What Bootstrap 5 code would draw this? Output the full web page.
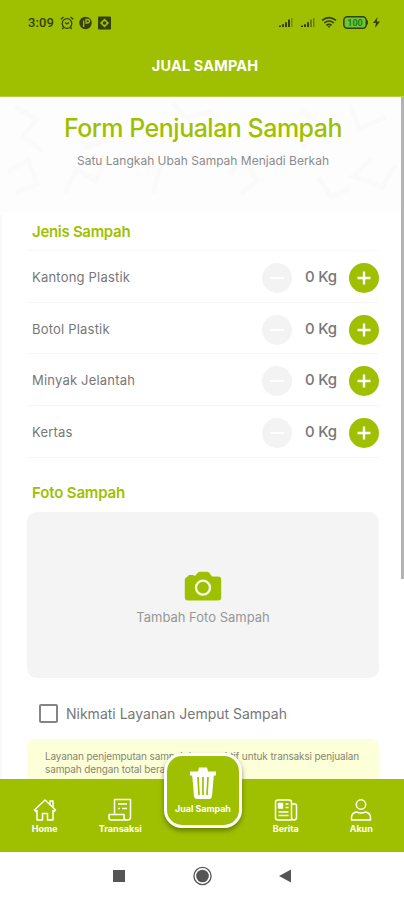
<!DOCTYPE html>
<html lang="id">
<head>
<meta charset="utf-8">
<meta name="viewport" content="width=device-width, initial-scale=1">
<title>Jual Sampah</title>
<link rel="stylesheet" href="https://cdn.jsdelivr.net/npm/bootstrap@5.3.0/dist/css/bootstrap.min.css">
<style>
:root { --leaf: #9fc000; --ink: #777; }
body { font-family: Inter, "Noto Sans", sans-serif; color: var(--ink); background: #fff; }
svg { display: block; flex: none; }
.screen { height: 900px; }
.leaf-bg { background: var(--leaf); }
.leaf-text { color: var(--leaf); }
.top-area { height: 97px; border-bottom: 1px solid #b8cf42; }
.status { height: 45px; padding: 0 24px 0 28px; color: #34410a; }
.clock { font: 500 13px/16px Roboto, sans-serif; letter-spacing: .1px; margin-right: 6px; }
.wifi { margin-left: 6px; }
.battery { margin-left: 6px; }
.app-title { height: 41px; font-size: 14.5px; letter-spacing: .15px; padding-left: 6px; }
.content { height: 682px; }
.hero { height: 115px; background: #fdfdfd; }
.hero-art { left: 0; top: 0; }
.hero h1 { font-size: 25px; line-height: 30px; font-weight: 500; letter-spacing: -.5px; padding-left: 2px; margin: 0; }
.hero p { font-size: 12px; line-height: 16px; margin: 10px 0 0; padding-left: 2px; color: #8b8b8b; }
.sheet { height: 567px; border-left: 2px solid #f9f9f9; padding: 2px 25px 0; border-top-left-radius: 6px; }
.section-name { font-size: 15px; line-height: 20px; font-weight: 600; padding-left: 5px; margin: 0; letter-spacing: -.3px; }
.photo-name { padding-top: 25px; padding-bottom: 1px; letter-spacing: -.15px; }
.waste-row { height: 51.7px; border-bottom: 1px solid #f6f6f6; padding: 3px 0 0 5px; }
.waste-name { font-size: 13px; letter-spacing: .2px; }
.round-btn { width: 30px; height: 30px; border: 0; padding: 0; }
.minus { background: #f3f3f3; }
.amount { width: 57px; font-size: 15px; font-weight: 500; letter-spacing: -.2px; margin-top: -1px; padding-left: 1px; }
.photo { height: 166px; background: #f4f4f4; border-radius: 10px; margin-top: 8px; padding-top: 8px; color: #979797; font-size: 13px; }
.photo span { margin-top: 6px; line-height: 20px; }
.tick { width: 19px; height: 19px; border: 2px solid #858585; border-radius: 2px !important; background: #fff; margin: 0; }
.pickup { margin: 26px 0 0 12px; height: 20px; font-size: 14px; }
.notice { margin-top: 15px; height: 60px; background: #fdffd9; border-radius: 8px; padding: 11px 18px; font-size: 10px; line-height: 13px; letter-spacing: -.13px; color: #85866f; }
.thumb { right: 0; top: 0; width: 3px; height: 482px; background: #b3b3b3; }
.tabs { height: 73px; color: #fff; padding-left: 2px; }
.tab { width: 75.5px; height: 72px; padding-top: 19px; font-size: 9px; font-weight: 700; line-height: 11px; color: #fff; }
.tab svg { margin-bottom: 1px; }
.tab-gap { width: 90px; }
.sell { left: 164px; top: -26px; width: 78px; height: 75px; border: 3px solid #fff; border-radius: 18px; box-shadow: 0 3px 5px rgba(60,75,0,.55); color: #fff; font-size: 8.9px; line-height: 10px; font-weight: 700; padding-top: 10px; }
.system { height: 48px; padding-left: 2px; }
</style>
<script src="https://cdn.jsdelivr.net/npm/bootstrap@5.3.0/dist/js/bootstrap.bundle.min.js"></script>
</head>
<body>
<div class="screen d-flex flex-column overflow-hidden">
<header class="top-area leaf-bg flex-shrink-0">
  <div class="status d-flex align-items-center justify-content-between">
    <div class="d-flex align-items-center">
      <span class="clock">3:09</span>
      <svg width="14" height="14" viewBox="0 0 14 14" fill="none" stroke="currentColor" stroke-width="1.3"><circle cx="7" cy="7.5" r="4.8"/><path d="M.8 3.3 3.5 1M13.2 3.3 10.5 1M5 6.4l2 1.5 2-1.5M3.5 11.5 2.3 13M10.5 11.5l1.2 1.5"/></svg>
      <svg class="ms-1" width="14" height="14" viewBox="0 0 14 14"><circle cx="7.5" cy="7" r="6.2" fill="currentColor"/><path d="M5.6 11V4.5M8 3.5h1.5q2 0 2 1.7T9.5 7H8z" fill="none" stroke="#9fc000" stroke-width="1.3"/></svg>
      <svg class="ms-1" width="15" height="14" viewBox="0 0 15 14"><rect x="2" y=".5" width="13" height="13" rx="1" fill="currentColor"/><path d="M8.5 2.4 13.1 7l-4.6 4.6L3.9 7z" fill="#9fc000"/><circle cx="8.5" cy="7" r="1.8" fill="currentColor"/></svg>
    </div>
    <div class="d-flex align-items-center">
      <svg width="14" height="11" viewBox="0 0 14 11" fill="currentColor"><path d="M0 8.5h2V10H0zM3 7.3h2V10H3zM6 5.2h2V10H6zM9 2.6h2V10H9z"/><path d="M12 1h1.5v9H12z" opacity=".4"/></svg>
      <svg class="ms-2" width="14" height="11" viewBox="0 0 14 11" fill="currentColor"><path d="M0 8.5h2V10H0zM3 7.3h2V10H3zM6 5.2h2V10H6z"/><path d="M9 2.6h2V10H9zM12 1h1.5v9H12z" opacity=".5"/></svg>
      <svg class="wifi" width="16" height="13" viewBox="0 0 16 13" fill="none" stroke="currentColor" stroke-width="1.6"><path d="M1 4.4Q8-1.3 15 4.4M3.2 7Q8 3 12.8 7M5.4 9.4Q8 7.3 10.6 9.4"/><path d="M6.5 10.2 8 12l1.5-1.8z" fill="currentColor" stroke="none"/></svg>
      <svg class="battery" width="26" height="13" viewBox="0 0 26 13"><rect x=".8" y=".8" width="22.5" height="11.4" rx="3.6" fill="#6fc536" stroke="currentColor" stroke-width="1.5"/><path d="M24.2 4.5v4" stroke="currentColor" stroke-width="1.5"/><text x="12" y="9.8" text-anchor="middle" font-family="Roboto, sans-serif" font-size="9" font-weight="700" fill="#24801c">100</text></svg>
      <svg class="ms-1" width="7" height="11" viewBox="0 0 7 11" fill="currentColor"><path d="M4.5 0 0 6h3L2 11l5-6.4H3.8z"/></svg>
    </div>
  </div>
  <div class="app-title d-flex align-items-center justify-content-center fw-bold text-white">JUAL SAMPAH</div>
</header>
<main class="content position-relative flex-shrink-0 overflow-hidden">
  <section class="hero position-relative overflow-hidden text-center">
    <svg class="hero-art position-absolute" width="404" height="115" viewBox="0 0 404 115" fill="none" stroke="#fafafa" stroke-width="5"><path d="M15 10l22 12-14 18 20 14M75 20l10 30 25-8M8 75l20-12 9 24-22 9M65 96l12-24 18 12 9-15M135 62l25 9-7 25M172 5l14 16 26-6M230 78l12-20 15 26-16 13M300 12l20 16-18 22M318 80l13 20 18-8M350 7l9 25 27-12M372 61l-19 18 29 11 14-22"/></svg>
    <div class="position-relative pt-3">
      <h1 class="leaf-text">Form Penjualan Sampah</h1>
      <p>Satu Langkah Ubah Sampah Menjadi Berkah</p>
    </div>
  </section>
  <section class="sheet">
    <h2 class="section-name leaf-text pt-2 pb-2">Jenis Sampah</h2>
    <div class="waste-list border-top border-light">
      <div class="waste-row d-flex align-items-center"><span class="waste-name me-auto">Kantong Plastik</span><button class="round-btn minus rounded-circle" aria-label="Kurangi"><svg class="mx-auto" width="16" height="16" viewBox="0 0 16 16" stroke="#fff" stroke-width="2"><path d="M1 8h14"/></svg></button><span class="amount text-center">0 Kg</span><button class="round-btn leaf-bg rounded-circle" aria-label="Tambah"><svg class="mx-auto" width="16" height="16" viewBox="0 0 16 16" stroke="#fff" stroke-width="2.4"><path d="M1.5 8h13M8 1.5v13"/></svg></button></div>
      <div class="waste-row d-flex align-items-center"><span class="waste-name me-auto">Botol Plastik</span><button class="round-btn minus rounded-circle" aria-label="Kurangi"><svg class="mx-auto" width="16" height="16" viewBox="0 0 16 16" stroke="#fff" stroke-width="2"><path d="M1 8h14"/></svg></button><span class="amount text-center">0 Kg</span><button class="round-btn leaf-bg rounded-circle" aria-label="Tambah"><svg class="mx-auto" width="16" height="16" viewBox="0 0 16 16" stroke="#fff" stroke-width="2.4"><path d="M1.5 8h13M8 1.5v13"/></svg></button></div>
      <div class="waste-row d-flex align-items-center"><span class="waste-name me-auto">Minyak Jelantah</span><button class="round-btn minus rounded-circle" aria-label="Kurangi"><svg class="mx-auto" width="16" height="16" viewBox="0 0 16 16" stroke="#fff" stroke-width="2"><path d="M1 8h14"/></svg></button><span class="amount text-center">0 Kg</span><button class="round-btn leaf-bg rounded-circle" aria-label="Tambah"><svg class="mx-auto" width="16" height="16" viewBox="0 0 16 16" stroke="#fff" stroke-width="2.4"><path d="M1.5 8h13M8 1.5v13"/></svg></button></div>
      <div class="waste-row d-flex align-items-center"><span class="waste-name me-auto">Kertas</span><button class="round-btn minus rounded-circle" aria-label="Kurangi"><svg class="mx-auto" width="16" height="16" viewBox="0 0 16 16" stroke="#fff" stroke-width="2"><path d="M1 8h14"/></svg></button><span class="amount text-center">0 Kg</span><button class="round-btn leaf-bg rounded-circle" aria-label="Tambah"><svg class="mx-auto" width="16" height="16" viewBox="0 0 16 16" stroke="#fff" stroke-width="2.4"><path d="M1.5 8h13M8 1.5v13"/></svg></button></div>
    </div>
    <h2 class="section-name leaf-text photo-name">Foto Sampah</h2>
    <div class="photo d-flex flex-column align-items-center justify-content-center">
      <svg width="38" height="30" viewBox="0 0 38 30"><path d="M3 6 L5 4 H9 L11 5 L14 1.5 Q15 .8 16 .8 H23 Q24 .8 25 1.5 L28 5.5 H34 Q37.2 5.5 37.2 8.5 V26.5 Q37.2 29.5 34 29.5 H4 Q.8 29.5 .8 26.5 V8.5 Q.8 6.5 3 6 Z" fill="#9fc000"/><circle cx="19" cy="16.7" r="7" fill="none" stroke="#f8faea" stroke-width="2.3"/></svg>
      <span>Tambah Foto Sampah</span>
    </div>
    <label class="pickup d-flex align-items-center"><input type="checkbox" class="tick form-check-input"><span class="ms-2">Nikmati Layanan Jemput Sampah</span></label>
    <div class="notice text-nowrap">Layanan penjemputan sampah hanya aktif untuk transaksi penjualan<br>sampah dengan total berat minimal 5 Kg</div>
  </section>
  <div class="thumb position-absolute"></div>
</main>
<nav class="tabs leaf-bg position-relative d-flex justify-content-center flex-shrink-0">
  <div class="tab d-flex flex-column align-items-center"><svg width="24" height="24" viewBox="0 0 24 24" fill="none" stroke="currentColor" stroke-width="1.5" stroke-linejoin="round"><path d="M1.5 12 12 2l10.5 10-1.5 1.5-1-1V22h-5.500v-6.500h-5V22H4v-9.500l-1 1zM17 6.500V3h3v6.500"/></svg>Home</div>
  <div class="tab d-flex flex-column align-items-center"><svg width="24" height="24" viewBox="0 0 24 24" fill="none" stroke="currentColor" stroke-width="1.5" stroke-linejoin="round"><path d="M6.5 15.500v-14h16v18q0 2.500-3 2.500H3q-2 0-2-2v-3.500h15v3q0 2.500 2.500 2.500M10 6h9M10 10.500h2M14 10.500h5"/></svg>Transaksi</div>
  <div class="tab-gap"></div>
  <div class="tab d-flex flex-column align-items-center"><svg width="24" height="24" viewBox="0 0 24 24" fill="none" stroke="currentColor" stroke-width="1.5" stroke-linejoin="round"><path d="M18 22H4q-2.500 0-2.500-2.500v-15Q1.500 2 4 2h11q2.500 0 2.500 2.500v15Q17.500 22 20 22t2.500-2.500V7.500Q22.500 6 21 6h-3.500M11.500 6h3M11.500 9.500h3M4.500 14h10M4.500 17.500h10"/><path d="M4.500 5.500h4v4.500h-4z" fill="currentColor"/></svg>Berita</div>
  <div class="tab d-flex flex-column align-items-center"><svg width="24" height="24" viewBox="0 0 24 24" fill="none" stroke="currentColor" stroke-width="1.5" stroke-linejoin="round"><circle cx="12" cy="6.500" r="4.700"/><path d="M2.500 22v-2.500Q2.500 15 7.500 14q4.500 2 9 0 5 1 5 5.500V22z"/></svg>Akun</div>
  <div class="sell leaf-bg position-absolute d-flex flex-column align-items-center"><svg width="28" height="34" viewBox="0 0 28 34"><path d="M1 5.500h8L10 1.500h8l1 4h8v4h-2.200L23 30q-.3 3-3 3H8q-2.700 0-3-3L3.200 9.500H1z" fill="#fff"/><path d="M9 11l1 18M14 11v18M19 11l-1 18" stroke="#9fc000" stroke-width="1.700"/></svg><span class="mt-1 text-nowrap">Jual Sampah</span></div>
</nav>
<footer class="system d-flex align-items-center justify-content-center flex-shrink-0">
  <svg width="180" height="20" viewBox="0 0 180 20"><path d="M0 4h12v12H0z" fill="#555"/><circle cx="89.500" cy="10" r="6.300" fill="#555"/><circle cx="89.500" cy="10" r="8.600" fill="none" stroke="#555" stroke-width="1.300"/><path d="M178 3.500v13L166 10z" fill="#555"/></svg>
</footer>
</div>
</body>
</html>
